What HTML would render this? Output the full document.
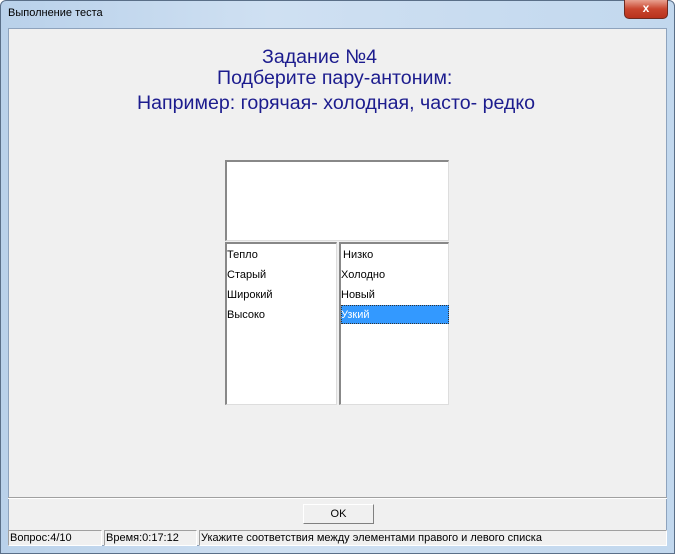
<!DOCTYPE html>
<html><head><meta charset="utf-8"><style>
*{margin:0;padding:0;box-sizing:border-box}
body{width:675px;height:554px;overflow:hidden;background:#fff;font-family:"Liberation Sans",sans-serif;position:relative}
.frame{position:absolute;left:0;top:0;width:675px;height:554px;background:linear-gradient(90deg,#b9d1ea,#cfe0f2 40%,#c2d8ee);border:1px solid #5a6f88;border-radius:6px 6px 0 0}
.title{position:absolute;left:8px;top:7px;font-size:11px;color:#000}
.close{position:absolute;left:624px;top:0;width:44px;height:19px;background:linear-gradient(#e8a190,#c9452e 50%,#b8321c);border:1px solid #6e2a20;border-top:none;border-radius:0 0 5px 5px;color:#fff;font-size:12px;font-weight:bold;text-align:center;line-height:17px}
.client{position:absolute;left:8px;top:28px;width:659px;height:518px;background:#f0f0f0;border:1px solid #8ea3bd}
.h{position:absolute;color:#1c1c8e;font-size:19.6px;white-space:nowrap}
.box{position:absolute;background:#fff;border-top:2px solid #888;border-left:2px solid #888;border-right:1px solid #ddd;border-bottom:1px solid #ddd}
.it{position:absolute;font-size:11px;color:#000;left:0}
.sep{position:absolute;left:8px;top:497px;width:659px;height:2px;border-top:1px solid #a0a0a0;border-bottom:1px solid #fff}
.ok{position:absolute;left:303px;top:504px;width:71px;height:20px;background:#f0f0f0;border:1px solid;border-color:#fff #808080 #808080 #fff;font-size:11px;text-align:center;line-height:18px}
.st{position:absolute;top:530px;height:16px;border:1px solid;border-color:#a0a0a0 #fff #fff #a0a0a0;font-size:11px;line-height:14px;padding-left:1px}
</style></head><body>
<div class="frame"></div>
<div class="title">Выполнение теста</div>
<div class="close">x</div>
<div class="client"></div>
<div class="h" style="left:262px;top:46px">Задание №4</div>
<div class="h" style="left:217px;top:67px">Подберите пару-антоним:</div>
<div class="h" style="left:137px;top:92px">Например: горячая- холодная, часто- редко</div>
<div class="box" style="left:225px;top:160px;width:224px;height:81px"></div>
<div class="box" style="left:225px;top:242px;width:112px;height:163px">
<div class="it" style="top:5px">Тепло</div>
<div class="it" style="top:25px">Старый</div>
<div class="it" style="top:45px">Широкий</div>
<div class="it" style="top:65px">Высоко</div>
</div>
<div class="box" style="left:339px;top:242px;width:110px;height:163px">
<div class="it" style="top:5px;left:2px">Низко</div>
<div class="it" style="top:25px">Холодно</div>
<div class="it" style="top:45px">Новый</div>
<div style="position:absolute;left:0;top:61px;width:108px;height:19px;background:#3399ff;border:1px dotted #333"></div>
<div class="it" style="top:65px;color:#fff">Узкий</div>
</div>
<div class="sep"></div>
<div class="ok">OK</div>
<div class="st" style="left:8px;width:94px">Вопрос:4/10</div>
<div class="st" style="left:104px;width:93px">Время:0:17:12</div>
<div class="st" style="left:199px;width:468px">Укажите соответствия между элементами правого и левого списка</div>
</body></html>
